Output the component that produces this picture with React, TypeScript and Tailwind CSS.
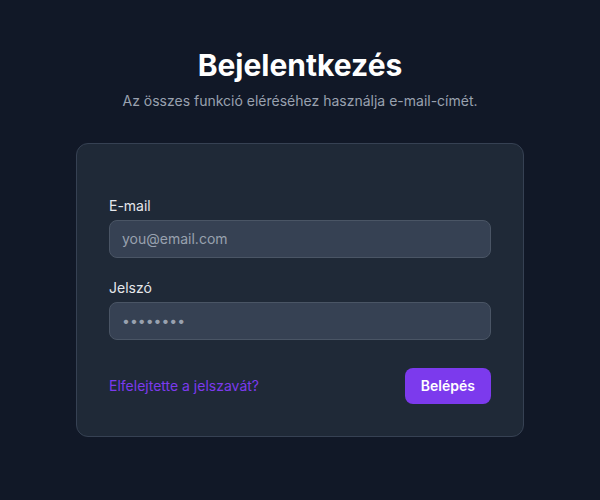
export default function App() {
  return (
    <div
      className="min-h-screen bg-[#111827] flex flex-col items-center pt-[47px] px-4"
      style={{ fontFamily: 'Inter, "Noto Sans", sans-serif' }}
    >
      <h1 className="text-3xl font-bold text-white">Bejelentkezés</h1>
      <p className="mt-2 text-sm text-gray-400">
        Az összes funkció eléréséhez használja e-mail-címét.
      </p>

      <div className="mt-8 w-full max-w-md rounded-xl border border-gray-700 bg-[#1f2937] px-8 pt-[52px] pb-8">
        <form className="space-y-5" onSubmit={(e) => e.preventDefault()}>
          <div>
            <label className="block text-sm text-gray-200 mb-1">E-mail</label>
            <input
              type="email"
              placeholder="you@email.com"
              className="w-full rounded-lg border border-gray-600 bg-gray-700 px-3 py-2 text-sm text-white placeholder-gray-400 outline-none"
            />
          </div>
          <div>
            <label className="block text-sm text-gray-200 mb-1">Jelszó</label>
            <input
              type="password"
              defaultValue="password"
              className="w-full rounded-lg border border-gray-600 bg-gray-700 px-3 py-2 text-sm text-gray-400 outline-none"
            />
          </div>
          <div className="flex items-center justify-between pt-2">
            <a href="#" className="text-sm text-[#7c3aed]">
              Elfelejtette a jelszavát?
            </a>
            <button
              type="submit"
              className="rounded-lg bg-[#7c3aed] px-4 py-2 text-sm font-semibold text-white"
            >
              Belépés
            </button>
          </div>
        </form>
      </div>
    </div>
  );
}
